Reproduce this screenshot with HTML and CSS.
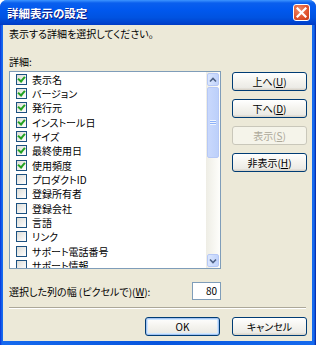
FILE: index.html
```html
<!DOCTYPE html>
<html lang="ja">
<head>
  <meta charset="UTF-8">
  <title>詳細表示の設定</title>
  <link rel="stylesheet" href="styles.css">
</head>
<body>
  <div class="window">
    <div class="titlebar">
      <span class="title">詳細表示の設定</span>
      <span class="close-btn">
        <svg width="11" height="11" viewBox="0 0 11 11"><path d="M1.5 1.5 L9.5 9.5 M9.5 1.5 L1.5 9.5" stroke="#fff" stroke-width="2.2" stroke-linecap="square"/></svg>
      </span>
    </div>

    <div class="client">
      <p class="intro">表示する詳細を選択してください。</p>
      <p class="label">詳細:</p>

      <div class="main-row">
        <div class="listbox">
          <ul class="items">
            <li><span class="check on"></span>表示名</li>
            <li><span class="check on"></span>バージョン</li>
            <li><span class="check on"></span>発行元</li>
            <li><span class="check on"></span>インストール日</li>
            <li><span class="check on"></span>サイズ</li>
            <li><span class="check on"></span>最終使用日</li>
            <li><span class="check on"></span>使用頻度</li>
            <li><span class="check"></span>プロダクトID</li>
            <li><span class="check"></span>登録所有者</li>
            <li><span class="check"></span>登録会社</li>
            <li><span class="check"></span>言語</li>
            <li><span class="check"></span>リンク</li>
            <li><span class="check"></span>サポート電話番号</li>
            <li><span class="check"></span>サポート情報</li>
          </ul>
          <div class="scrollbar">
            <span class="sb-btn">
              <svg width="8" height="6" viewBox="0 0 8 6"><path d="M1 4.5 L4 1.5 L7 4.5" fill="none" stroke="#4d6185" stroke-width="1.6"/></svg>
            </span>
            <div class="sb-track">
              <span class="sb-thumb"><span class="grip"></span></span>
            </div>
            <span class="sb-btn">
              <svg width="8" height="6" viewBox="0 0 8 6"><path d="M1 1.5 L4 4.5 L7 1.5" fill="none" stroke="#4d6185" stroke-width="1.6"/></svg>
            </span>
          </div>
        </div>

        <div class="side-buttons">
          <button class="btn">上へ(<u>U</u>)</button>
          <button class="btn">下へ(<u>D</u>)</button>
          <button class="btn" disabled>表示(<u>S</u>)</button>
          <button class="btn">非表示(<u>H</u>)</button>
        </div>
      </div>

      <div class="width-row">
        <span>選択した列の幅 (ピクセルで)(<u>W</u>):</span>
        <span class="num-input">80</span>
      </div>

      <div class="separator"></div>

      <div class="footer">
        <button class="btn default">OK</button>
        <button class="btn">キャンセル</button>
      </div>
    </div>
  </div>
</body>
</html>
```

FILE: styles.css
```css
body {
  margin: 0;
  background: #fff;
  font-family: "Noto Sans CJK JP", "Noto Sans", sans-serif;
  font-size: 10px;
  font-feature-settings: "palt";
  color: #000;
}
.window {
  width: 316px;
  height: 345px;
  display: flex;
  flex-direction: column;
  background: linear-gradient(to right, #0831d9, #166aee 2px, #0855dd 50%, #166aee calc(100% - 2px), #001ea0);
  border-radius: 7px 7px 0 0;
  overflow: hidden;
}
.titlebar {
  height: 25px;
  flex-shrink: 0;
  display: flex;
  align-items: center;
  justify-content: space-between;
  padding: 0 6px 0 7px;
  background: linear-gradient(#3d95ff, #0a5fee 3px, #0058ee 40%, #0053e1 70%, #0044d0 90%, #003bc4);
}
.title {
  color: #fff;
  font-weight: bold;
  font-size: 11.5px;
  text-shadow: 1px 1px #0a1883;
}
.close-btn {
  width: 17px;
  height: 17px;
  box-sizing: border-box;
  border: 1px solid #fff;
  border-radius: 3px;
  background: radial-gradient(circle at 35% 30%, #ef8a68, #e0522c 60%, #c53a18);
  display: flex;
  align-items: center;
  justify-content: center;
}
.client {
  flex: 1;
  margin: 0 4px 4px 3px;
  background: #ece9d8;
  padding: 3px 5px 0 6px;
  display: flex;
  flex-direction: column;
}
.intro, .label {
  margin: 0;
  line-height: 12px;
}
.label {
  margin-top: 16px;
}
.main-row {
  display: flex;
  margin-top: 3px;
}
.listbox {
  width: 212px;
  height: 198px;
  box-sizing: border-box;
  border: 1px solid #7f9db9;
  background: #fff;
  display: flex;
  overflow: hidden;
}
.items {
  list-style: none;
  margin: 0;
  padding: 0;
  flex: 1;
  overflow: hidden;
}
.items li {
  height: 14.33px;
  display: flex;
  align-items: center;
  padding-left: 6px;
  white-space: nowrap;
}
.check {
  width: 11px;
  height: 11px;
  box-sizing: border-box;
  border: 1px solid #1c5180;
  background: linear-gradient(135deg, #dcdcd7, #fff);
  margin-right: 5px;
  flex-shrink: 0;
  position: relative;
}
.check.on::after {
  content: "";
  position: absolute;
  left: 2px;
  top: 0px;
  width: 3px;
  height: 5px;
  border: solid #21a121;
  border-width: 0 2px 2px 0;
  transform: rotate(40deg);
}
.scrollbar {
  width: 14px;
  display: flex;
  flex-direction: column;
  background: linear-gradient(to right, #eeede5, #fefefb);
  padding: 1px 0;
  box-sizing: border-box;
}
.sb-btn {
  height: 13px;
  margin: 0 1px;
  border: 1px solid #b6c8f6;
  border-radius: 2px;
  background: linear-gradient(to right, #dae6fe, #c1d3fb);
  display: flex;
  align-items: center;
  justify-content: center;
  box-sizing: border-box;
}
.sb-track {
  flex: 1;
  padding: 1px 0;
}
.sb-thumb {
  display: flex;
  align-items: center;
  justify-content: center;
  height: 71px;
  margin: 0 1px;
  box-sizing: border-box;
  border: 1px solid #b6c8f6;
  border-radius: 2px;
  background: linear-gradient(to right, #c9d8fc, #bcd0fa);
}
.grip {
  width: 6px;
  height: 5px;
  background: repeating-linear-gradient(#eef4fe 0 1px, #8cb0f8 1px 2px);
}
.side-buttons {
  display: flex;
  flex-direction: column;
  gap: 8px;
  margin: 1px 0 0 11px;
}
.btn {
  width: 75px;
  height: 19px;
  padding: 0;
  font: inherit;
  font-feature-settings: "palt";
  color: #000;
  border: 1px solid #003c74;
  border-radius: 3px;
  background: linear-gradient(#ffffff, #f4f3ee 50%, #ecebe6 85%, #d6d0c5);
  box-sizing: border-box;
}
.btn:disabled {
  color: #aca899;
  border-color: #c9c7ba;
  background: #f5f4ea;
}
.btn.default {
  box-shadow: inset 0 0 0 1px #a4c3f2, inset 0 0 0 2px #cee7ff;
}
.width-row {
  display: flex;
  align-items: center;
  justify-content: space-between;
  width: 212px;
  margin-top: 13px;
}
.num-input {
  width: 29px;
  height: 18px;
  box-sizing: border-box;
  border: 1px solid #7f9db9;
  background: #fff;
  text-align: right;
  padding-right: 3px;
  line-height: 16px;
}
.separator {
  margin-top: 7px;
  height: 1px;
  border-top: 1px solid #aca899;
  background: #fff;
  margin-right: 1px;
}
.footer {
  display: flex;
  justify-content: flex-end;
  gap: 12px;
  margin-top: 8px;
}
```
